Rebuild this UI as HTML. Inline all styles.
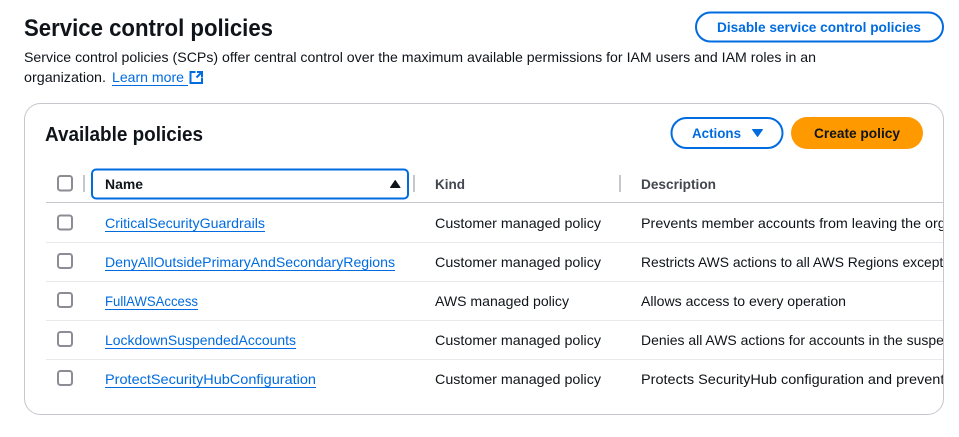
<!DOCTYPE html>
<html><head><meta charset="utf-8"><style>
html,body{margin:0;padding:0;background:#fff;width:959px;height:437px;overflow:hidden}
svg{display:block}
text{font-family:"Liberation Sans",sans-serif;font-size:14px;fill:#0f141a}
.b{font-weight:700}
.l{fill:#006ce0}
.h{font-weight:700;fill:#424650}
.cb{fill:#fff;stroke:#8c8c94;stroke-width:2}
.u{stroke:#006ce0;stroke-width:1;fill:none}
.sep{stroke:#c6c6cd;stroke-width:2}
.row{stroke:#e8e8ed;stroke-width:1}
</style></head><body>
<svg width="959" height="437" viewBox="0 0 959 437" xmlns="http://www.w3.org/2000/svg">
<defs><clipPath id="c"><rect x="630" y="205" width="313" height="190"/></clipPath></defs>
<text x="24" y="36" class="b" style="font-size:24px" textLength="249" lengthAdjust="spacingAndGlyphs">Service control policies</text>
<text x="24" y="62" textLength="792" lengthAdjust="spacingAndGlyphs">Service control policies (SCPs) offer central control over the maximum available permissions for IAM users and IAM roles in an</text>
<text x="24" y="82" textLength="82" lengthAdjust="spacingAndGlyphs">organization.</text>
<text x="112" y="82" class="l" textLength="72" lengthAdjust="spacingAndGlyphs">Learn more</text>
<path class="u" d="M112 85.500H188"/>
<path d="M195.500 72H190.500V83H202V77.500" fill="none" stroke="#006ce0" stroke-width="2"/>
<path d="M197 72H202V77M201.500 72.500L196.500 77.500" fill="none" stroke="#006ce0" stroke-width="2"/>
<rect x="696" y="12.500" width="247" height="29" rx="14.500" fill="#fff" stroke="#006ce0" stroke-width="2"/>
<text x="717" y="32" class="b l" textLength="204" lengthAdjust="spacingAndGlyphs">Disable service control policies</text>
<rect x="24.500" y="103.500" width="919" height="311" rx="16" fill="#fff" stroke="#c6c6cd"/>
<text x="45" y="141" class="b" style="font-size:20px" textLength="158" lengthAdjust="spacingAndGlyphs">Available policies</text>
<rect x="671.500" y="118" width="111" height="30" rx="15" fill="#fff" stroke="#006ce0" stroke-width="2"/>
<text x="692" y="138" class="b l" textLength="49" lengthAdjust="spacingAndGlyphs">Actions</text>
<path d="M752.500 129.500H762.500L757.500 136.500Z" fill="#006ce0" stroke="#006ce0" stroke-linejoin="round"/>
<rect x="791" y="117" width="132" height="32" rx="16" fill="#f90"/>
<text x="814" y="138" class="b" textLength="86" lengthAdjust="spacingAndGlyphs">Create policy</text>
<rect class="cb" x="58" y="176" width="14" height="14.500" rx="2.500"/>
<path class="sep" d="M84 175V192M414 175V192M620 175V192"/>
<rect x="92" y="169.500" width="316" height="29" rx="4" fill="#fff" stroke="#006ce0" stroke-width="2"/>
<text x="105" y="189" class="b" textLength="38" lengthAdjust="spacingAndGlyphs">Name</text>
<path d="M390.500 187.500H400L395.200 180.500Z" fill="#0f141a" stroke="#0f141a" stroke-linejoin="round"/>
<text x="435" y="189" class="h" textLength="30" lengthAdjust="spacingAndGlyphs">Kind</text>
<text x="641" y="189" class="h" textLength="75" lengthAdjust="spacingAndGlyphs">Description</text>
<path d="M46 202.500H943" stroke="#c6c6cd"/>
<path class="row" d="M46 242.500H943M46 281.500H943M46 320.500H943M46 359.500H943"/>
<rect class="cb" x="58" y="215.500" width="14" height="14" rx="2.500"/>
<rect class="cb" x="58" y="254" width="14" height="14" rx="2.500"/>
<rect class="cb" x="58" y="293" width="14" height="14" rx="2.500"/>
<rect class="cb" x="58" y="332" width="14" height="14" rx="2.500"/>
<rect class="cb" x="58" y="371" width="14" height="14" rx="2.500"/>
<text x="105" y="228" class="l" textLength="160" lengthAdjust="spacingAndGlyphs">CriticalSecurityGuardrails</text>
<text x="105" y="267" class="l" textLength="290" lengthAdjust="spacingAndGlyphs">DenyAllOutsidePrimaryAndSecondaryRegions</text>
<text x="105" y="306" class="l" textLength="93" lengthAdjust="spacingAndGlyphs">FullAWSAccess</text>
<text x="105" y="345" class="l" textLength="191" lengthAdjust="spacingAndGlyphs">LockdownSuspendedAccounts</text>
<text x="105" y="384" class="l" textLength="211" lengthAdjust="spacingAndGlyphs">ProtectSecurityHubConfiguration</text>
<path class="u" d="M105 231.500H265M105 270.500H395M105 309.500H198M105 348.500H296M105 387.500H316"/>
<text x="435" y="228" textLength="166" lengthAdjust="spacingAndGlyphs">Customer managed policy</text>
<text x="435" y="267" textLength="166" lengthAdjust="spacingAndGlyphs">Customer managed policy</text>
<text x="435" y="306" textLength="134" lengthAdjust="spacingAndGlyphs">AWS managed policy</text>
<text x="435" y="345" textLength="166" lengthAdjust="spacingAndGlyphs">Customer managed policy</text>
<text x="435" y="384" textLength="166" lengthAdjust="spacingAndGlyphs">Customer managed policy</text>
<g clip-path="url(#c)">
<text x="641" y="228" textLength="362" lengthAdjust="spacingAndGlyphs">Prevents member accounts from leaving the organization</text>
<text x="641" y="267" textLength="340" lengthAdjust="spacingAndGlyphs">Restricts AWS actions to all AWS Regions except those</text>
<text x="641" y="306" textLength="205" lengthAdjust="spacingAndGlyphs">Allows access to every operation</text>
<text x="641" y="345" textLength="334" lengthAdjust="spacingAndGlyphs">Denies all AWS actions for accounts in the suspended</text>
<text x="641" y="384" textLength="338" lengthAdjust="spacingAndGlyphs">Protects SecurityHub configuration and prevents any</text>
</g>
</svg>
</body></html>
